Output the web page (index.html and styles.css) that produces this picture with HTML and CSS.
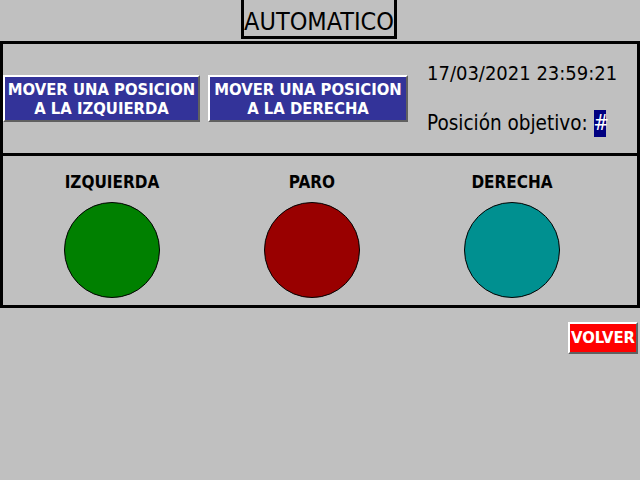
FILE: index.html
```html
<!DOCTYPE html>
<html>
<head>
<meta charset="utf-8">
<link rel="stylesheet" href="styles.css">
</head>
<body>
<div class="screen">
  <div class="header">
    <div class="title">AUTOMATICO</div>
  </div>
  <div class="panel">
    <div class="top">
      <div class="btn btn-left">MOVER UNA POSICION<br>A LA IZQUIERDA</div>
      <div class="btn btn-right">MOVER UNA POSICION<br>A LA DERECHA</div>
      <div class="info">
        <div class="date">17/03/2021 23:59:21</div>
        <div class="target">Posición objetivo: <span class="hash">#</span></div>
      </div>
    </div>
    <div class="bottom">
      <div class="lamp">
        <div class="lamp-label">IZQUIERDA</div>
        <div class="circle green"></div>
      </div>
      <div class="lamp">
        <div class="lamp-label">PARO</div>
        <div class="circle red"></div>
      </div>
      <div class="lamp">
        <div class="lamp-label">DERECHA</div>
        <div class="circle teal"></div>
      </div>
    </div>
  </div>
  <div class="footer">
    <div class="volver">VOLVER</div>
  </div>
</div>
</body>
</html>
```
FILE: styles.css
```css
html, body {
  margin: 0;
  padding: 0;
  background: #c0c0c0;
}
.screen {
  width: 640px;
  height: 480px;
  background: #c0c0c0;
  font-family: "DejaVu Sans", sans-serif;
}
.header {
  display: flex;
  justify-content: flex-start;
  height: 41px;
}
.title {
  margin-left: 241px;
  width: 150px;
  height: 36px;
  border: 3px solid #000;
  border-top: none;
  font-family: "DejaVu Sans Condensed", "DejaVu Sans", sans-serif;
  font-size: 25px;
  line-height: 44px;
  text-align: center;
  color: #000;
  overflow: hidden;
}
.panel {
  border: 3px solid #000;
  height: 261px;
  display: flex;
  flex-direction: column;
}
.top {
  height: 109px;
  border-bottom: 3px solid #000;
  display: flex;
  align-items: flex-start;
}
.btn {
  box-sizing: border-box;
  height: 47px;
  margin-top: 31px;
  background: #333399;
  color: #fff;
  font-family: "DejaVu Sans Condensed", "DejaVu Sans", sans-serif;
  font-weight: bold;
  font-size: 16.5px;
  line-height: 19px;
  text-align: center;
  padding-top: 3px;
  border-top: 2px solid #fff;
  border-left: 2px solid #fff;
  border-right: 2px solid #606060;
  border-bottom: 2px solid #606060;
  white-space: nowrap;
}
.btn-left {
  width: 197px;
}
.btn-right {
  width: 200px;
  margin-left: 8px;
}
.info {
  margin-left: 19px;
  padding-top: 16px;
  font-family: "DejaVu Sans Condensed", "DejaVu Sans", sans-serif;
  font-size: 20px;
  color: #000;
}
.date {
  height: 50px;
  line-height: 26px;
}
.target {
  line-height: 26px;
  font-size: 20.5px;
}
.hash {
  display: inline-block;
  background: #000080;
  color: #fff;
  width: 12px;
  height: 27px;
  text-align: center;
  vertical-align: top;
}
.bottom {
  flex: 1;
  display: grid;
  grid-template-columns: 200px 200px 200px;
  padding-left: 9px;
}
.lamp {
  display: flex;
  flex-direction: column;
  align-items: center;
  padding-top: 16px;
}
.lamp-label {
  font-family: "DejaVu Sans Condensed", "DejaVu Sans", sans-serif;
  font-weight: bold;
  font-size: 17px;
  line-height: 20px;
  color: #000;
}
.circle {
  margin-top: 10px;
  width: 94px;
  height: 94px;
  border: 1px solid #000;
  border-radius: 50%;
}
.green { background: #008000; }
.red { background: #990000; }
.teal { background: #009090; }
.footer {
  display: flex;
  justify-content: flex-end;
  padding-top: 14px;
  padding-right: 2px;
}
.volver {
  box-sizing: border-box;
  width: 70px;
  height: 32px;
  background: #ff0000;
  color: #fff;
  font-family: "DejaVu Sans Condensed", "DejaVu Sans", sans-serif;
  font-weight: bold;
  font-size: 16.5px;
  line-height: 28px;
  text-align: center;
  border-top: 2px solid #fff;
  border-left: 2px solid #fff;
  border-right: 2px solid #606060;
  border-bottom: 2px solid #606060;
}
```
